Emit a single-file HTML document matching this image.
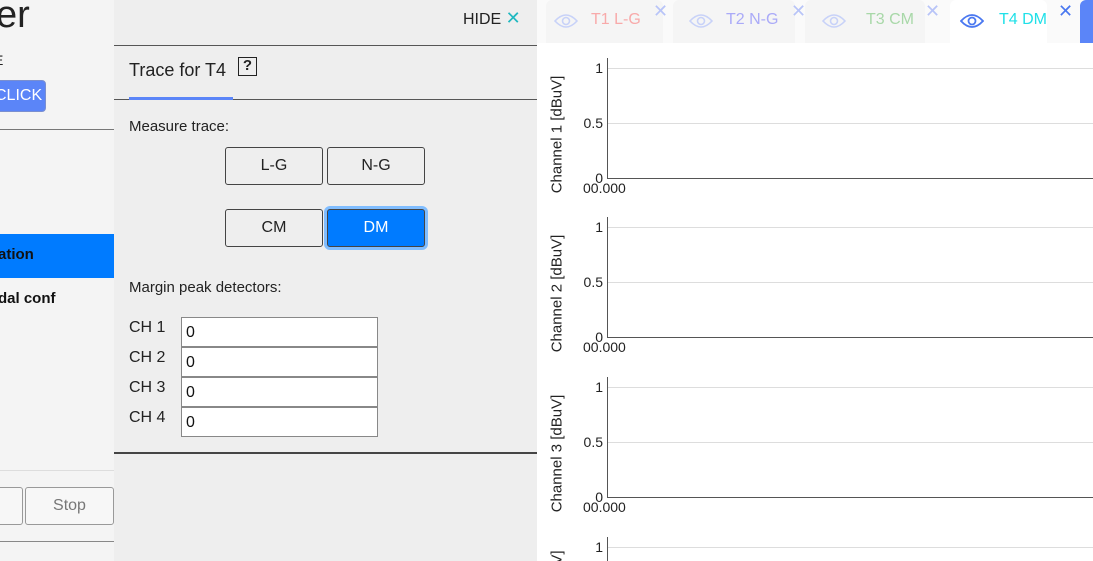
<!DOCTYPE html>
<html style="width:1093px;height:561px;overflow:hidden"><head><meta charset="utf-8"><style>
*{box-sizing:border-box;margin:0;padding:0}
body{width:1093px;height:561px;overflow:hidden;position:relative;font-family:"Liberation Sans",sans-serif;background:#fff;color:#222}
.abs{position:absolute}
.btn{position:absolute;border:1px solid #444;border-radius:3px;background:#eee;font-size:16px;text-align:center;line-height:36px;color:#222}
.inp{position:absolute;left:181px;width:197px;height:30px;border:1px solid #888;background:#fff;font-size:16px;padding:6px 0 0 4px;color:#111}
.lbl{position:absolute;left:129px;font-size:16px;color:#222}
.tab{position:absolute;top:0;height:43px;background:#f5f5f5;border-radius:6px 6px 0 0}
.tab span{position:absolute;top:11px;font-size:16px}
.x{position:absolute;top:1px;font-size:18px;color:#b8c4f8}
.ylab{position:absolute;font-size:15px;transform:rotate(-90deg);transform-origin:center;white-space:nowrap;width:140px;text-align:center;color:#222}
.tick{position:absolute;font-size:14px;color:#222;text-align:right;width:30px}
.grid{position:absolute;left:607px;right:0;height:1px;background:#ddd}
</style></head><body>
<div class="abs" style="left:0;top:0;width:114px;height:561px;background:#f4f4f4"></div>
<div class="abs" style="left:-4px;top:-6px;font-size:38px;color:#222">er</div>
<div class="abs" style="left:-6px;top:52px;font-size:14px">E</div>
<div class="abs" style="left:-6px;top:80px;width:52px;height:32px;background:#5b85f8;border:1px solid #7a8fd0;border-radius:4px;color:#fff;font-size:16px;line-height:30px;text-align:right;padding-right:5px">CLICK</div>
<div class="abs" style="left:0;top:129px;width:114px;height:1px;background:#777"></div>
<div class="abs" style="left:0;top:234px;width:114px;height:44px;background:#007bff"></div>
<div class="abs" style="left:-2px;top:246px;font-size:15px;font-weight:bold;color:#111">ation</div>
<div class="abs" style="left:-2px;top:290px;font-size:15px;font-weight:bold;color:#111">dal conf</div>
<div class="abs" style="left:0;top:470px;width:114px;height:1px;background:#ddd"></div>
<div class="abs" style="left:-20px;top:487px;width:43px;height:38px;border:1px solid #999;border-radius:3px;background:#f7f7f7"></div>
<div class="abs" style="left:25px;top:487px;width:89px;height:38px;border:1px solid #999;border-radius:3px;background:#f7f7f7;color:#777;font-size:16px;text-align:center;line-height:36px">Stop</div>
<div class="abs" style="left:0;top:541px;width:114px;height:1px;background:#888"></div>
<div class="abs" style="left:114px;top:0;width:423px;height:561px;background:#eee"></div>
<div class="abs" style="left:463px;top:8px;font-size:16px;color:#222">HIDE <span style="color:#20b8c0;font-size:18px">✕</span></div>
<div class="abs" style="left:114px;top:45px;width:423px;height:1px;background:#555"></div>
<div class="abs" style="left:129px;top:60px;font-size:18px;color:#222">Trace for T4</div>
<div class="abs" style="left:238px;top:57px;width:19px;height:19px;border:1.5px solid #222;font-size:15px;font-weight:bold;text-align:center;line-height:16px">?</div>
<div class="abs" style="left:114px;top:99px;width:423px;height:1px;background:#555"></div>
<div class="abs" style="left:129px;top:97px;width:104px;height:3px;background:#5b85f8"></div>
<div class="lbl" style="top:118px;font-size:15px">Measure trace:</div>
<div class="btn" style="left:225px;top:147px;width:98px;height:38px">L-G</div>
<div class="btn" style="left:327px;top:147px;width:98px;height:38px">N-G</div>
<div class="btn" style="left:225px;top:209px;width:98px;height:38px">CM</div>
<div class="btn" style="left:327px;top:209px;width:98px;height:38px;background:#007bff;color:#fff;box-shadow:0 0 0 3px #80bdff">DM</div>
<div class="lbl" style="top:279px;font-size:15px">Margin peak detectors:</div>
<div class="lbl" style="top:319px">CH 1</div><div class="inp" style="top:317px">0</div>
<div class="lbl" style="top:349px">CH 2</div><div class="inp" style="top:347px">0</div>
<div class="lbl" style="top:379px">CH 3</div><div class="inp" style="top:377px">0</div>
<div class="lbl" style="top:409px">CH 4</div><div class="inp" style="top:407px">0</div>
<div class="abs" style="left:114px;top:452px;width:423px;height:2px;background:#444"></div>
<div class="abs" style="left:537px;top:0;width:556px;height:43px;background:#fafafa"></div>
<div class="tab" style="left:546px;width:117px"><svg class="abs" style="left:8px;top:12px" width="24" height="18" viewBox="0 0 24 18"><path d="M1 9Q12-3 23 9Q12 21 1 9Z" fill="none" stroke="#c8d2f8" stroke-width="1.6"/><circle cx="12" cy="9" r="3.5" fill="none" stroke="#c8d2f8" stroke-width="1.6"/></svg><span style="left:45px;color:#f8aaaa">T1 L-G</span><div class="x" style="left:107px">✕</div></div>
<div class="tab" style="left:673px;width:122px"><svg class="abs" style="left:16px;top:12px" width="24" height="18" viewBox="0 0 24 18"><path d="M1 9Q12-3 23 9Q12 21 1 9Z" fill="none" stroke="#c8d2f8" stroke-width="1.6"/><circle cx="12" cy="9" r="3.5" fill="none" stroke="#c8d2f8" stroke-width="1.6"/></svg><span style="left:53px;color:#aaaaf8">T2 N-G</span><div class="x" style="left:118px">✕</div></div>
<div class="tab" style="left:805px;width:120px"><svg class="abs" style="left:17px;top:12px" width="24" height="18" viewBox="0 0 24 18"><path d="M1 9Q12-3 23 9Q12 21 1 9Z" fill="none" stroke="#c8d2f8" stroke-width="1.6"/><circle cx="12" cy="9" r="3.5" fill="none" stroke="#c8d2f8" stroke-width="1.6"/></svg><span style="left:61px;color:#a8d8a8">T3 CM</span><div class="x" style="left:120px">✕</div></div>
<div class="tab" style="left:950px;width:97px;background:#fff"><svg class="abs" style="left:10px;top:12px" width="24" height="18" viewBox="0 0 24 18"><path d="M1 9Q12-3 23 9Q12 21 1 9Z" fill="none" stroke="#4a78f0" stroke-width="1.8"/><circle cx="12" cy="9" r="3.5" fill="none" stroke="#4a78f0" stroke-width="1.8"/></svg><span style="left:49px;color:#20e0e8">T4 DM</span><div class="x" style="left:108px;color:#4a78f0">✕</div></div>
<div class="abs" style="left:1080px;top:0;width:20px;height:43px;background:#5b85f8;border-radius:6px 0 0 0"></div>
<div class="grid" style="top:68px"></div><div class="grid" style="top:123px"></div>
<div class="abs" style="left:607px;top:58px;width:1px;height:121px;background:#555"></div>
<div class="abs" style="left:607px;top:178px;right:0;height:1px;background:#555"></div>
<div class="tick" style="left:573px;top:60px">1</div><div class="tick" style="left:573px;top:115px">0.5</div><div class="tick" style="left:573px;top:170px">0</div>
<div class="abs" style="left:583px;top:180px;font-size:14px">00.000</div>
<div class="ylab" style="left:487px;top:126px">Channel 1 [dBuV]</div>
<div class="grid" style="top:227px"></div><div class="grid" style="top:282px"></div>
<div class="abs" style="left:607px;top:217px;width:1px;height:121px;background:#555"></div>
<div class="abs" style="left:607px;top:337px;right:0;height:1px;background:#555"></div>
<div class="tick" style="left:573px;top:219px">1</div><div class="tick" style="left:573px;top:274px">0.5</div><div class="tick" style="left:573px;top:329px">0</div>
<div class="abs" style="left:583px;top:339px;font-size:14px">00.000</div>
<div class="ylab" style="left:487px;top:285px">Channel 2 [dBuV]</div>
<div class="grid" style="top:387px"></div><div class="grid" style="top:442px"></div>
<div class="abs" style="left:607px;top:377px;width:1px;height:121px;background:#555"></div>
<div class="abs" style="left:607px;top:497px;right:0;height:1px;background:#555"></div>
<div class="tick" style="left:573px;top:379px">1</div><div class="tick" style="left:573px;top:434px">0.5</div><div class="tick" style="left:573px;top:489px">0</div>
<div class="abs" style="left:583px;top:499px;font-size:14px">00.000</div>
<div class="ylab" style="left:487px;top:445px">Channel 3 [dBuV]</div>
<div class="grid" style="top:547px"></div>
<div class="abs" style="left:607px;top:537px;width:1px;height:24px;background:#555"></div>
<div class="tick" style="left:573px;top:539px">1</div>
<div class="abs" style="left:550px;top:547px;width:20px;height:14px;overflow:hidden"><div style="transform:rotate(-90deg);font-size:15px;position:absolute;left:0;top:2px">V]</div></div>
</body></html>
